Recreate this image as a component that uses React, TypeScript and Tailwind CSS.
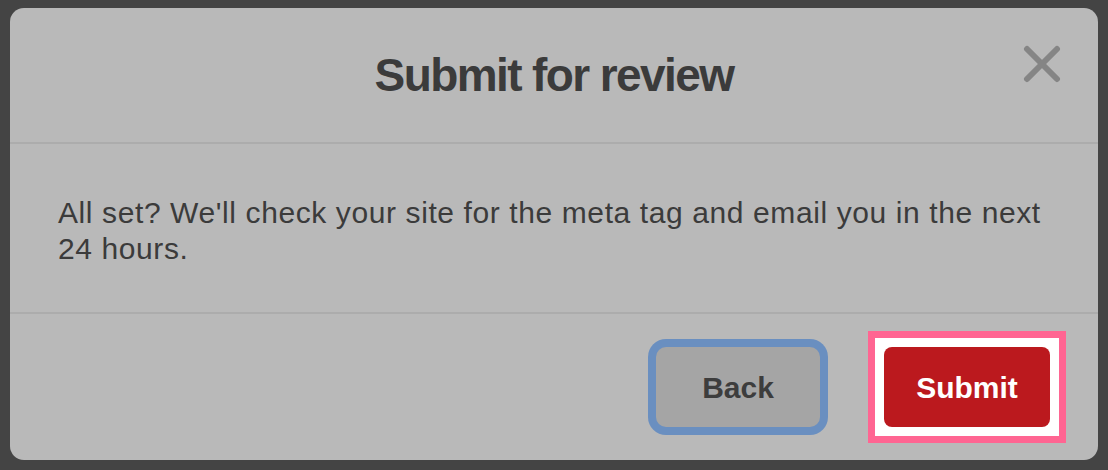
export default function App() {
  return (
    <div className="min-h-screen w-full bg-[#444444] pt-[8px] pl-[10px]" style={{ fontFamily: '"Liberation Sans", Arial, sans-serif' }}>
      <div className="relative flex h-[452px] w-[1088px] flex-col rounded-[14px] bg-[#b9b9b9]">
        {/* header */}
        <div className="flex h-[136px] items-center justify-center border-b-2 border-[#acacac]">
          <h1 className="text-[46px] font-bold leading-none tracking-[-1.6px] text-[#3b3b3b]">Submit for review</h1>
        </div>
        <button type="button" aria-label="Close" className="absolute right-[37px] top-[37px] text-[#858585]">
          <svg width="38" height="38" viewBox="0 0 38 38" fill="none" stroke="currentColor" strokeWidth="6" strokeLinecap="round">
            <line x1="4" y1="4" x2="34" y2="34" />
            <line x1="34" y1="4" x2="4" y2="34" />
          </svg>
        </button>

        {/* body */}
        <div className="border-b-2 border-[#acacac] px-[48px] pb-[45px] pt-[51px]">
          <p className="text-[30px] leading-[36px] tracking-[0.6px] text-[#3b3b3b]">
            All set? We'll check your site for the meta tag and email you in the next 24 hours.
          </p>
        </div>

        {/* footer */}
        <div className="flex flex-1 items-center justify-end gap-12 pr-[32px]">
          <button
            type="button"
            className="h-[80px] w-[164px] rounded-[10px] bg-[#a5a5a5] text-[30px] font-bold text-[#3d3d3d] ring-8 ring-[#6a8fc0]"
          >
            Back
          </button>
          <div className="border-[7px] border-[#ff6592] bg-white px-[9px] py-[9px]">
            <button
              type="button"
              className="block h-[80px] w-[166px] rounded-[8px] bg-[#bb191e] text-[30px] font-bold text-white"
            >
              Submit
            </button>
          </div>
        </div>
      </div>
    </div>
  )
}
